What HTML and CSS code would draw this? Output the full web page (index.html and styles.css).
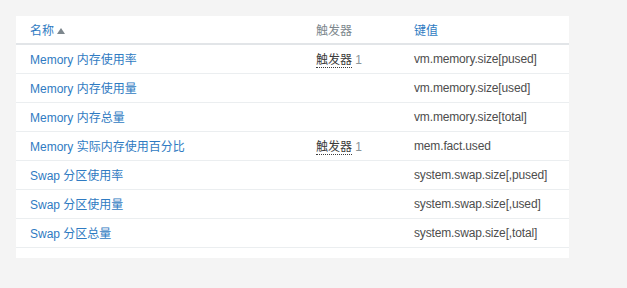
FILE: index.html
```html
<!DOCTYPE html>
<html lang="zh">
<head>
    <meta charset="UTF-8">
    <title>监控项</title>
    <link rel="stylesheet" href="styles.css">
</head>
<body>
    <div class="panel">
        <table class="list">
            <thead>
                <tr>
                    <th class="col-name"><a class="sort">名称</a><span class="arrow"></span></th>
                    <th class="col-trig">触发器</th>
                    <th class="col-key"><a class="sort">键值</a></th>
                </tr>
            </thead>
            <tbody>
                <tr>
                    <td><a>Memory 内存使用率</a></td>
                    <td><span class="trig">触发器</span> <sup class="count">1</sup></td>
                    <td class="key">vm.memory.size[pused]</td>
                </tr>
                <tr>
                    <td><a>Memory 内存使用量</a></td>
                    <td></td>
                    <td class="key">vm.memory.size[used]</td>
                </tr>
                <tr>
                    <td><a>Memory 内存总量</a></td>
                    <td></td>
                    <td class="key">vm.memory.size[total]</td>
                </tr>
                <tr>
                    <td><a>Memory 实际内存使用百分比</a></td>
                    <td><span class="trig">触发器</span> <sup class="count">1</sup></td>
                    <td class="key">mem.fact.used</td>
                </tr>
                <tr>
                    <td><a>Swap 分区使用率</a></td>
                    <td></td>
                    <td class="key">system.swap.size[,pused]</td>
                </tr>
                <tr>
                    <td><a>Swap 分区使用量</a></td>
                    <td></td>
                    <td class="key">system.swap.size[,used]</td>
                </tr>
                <tr>
                    <td><a>Swap 分区总量</a></td>
                    <td></td>
                    <td class="key">system.swap.size[,total]</td>
                </tr>
            </tbody>
        </table>
    </div>
</body>
</html>
```

FILE: styles.css
```css
* {
    box-sizing: border-box;
    margin: 0;
    padding: 0;
}

body {
    background: #f4f4f4;
    font-family: "Liberation Sans", Arial, "Noto Sans CJK SC", sans-serif;
    font-size: 12px;
    color: #4d4d4d;
    padding: 16px;
}

.panel {
    background: #fff;
    width: 553px;
    padding-bottom: 10px;
}

.list {
    width: 100%;
    border-collapse: collapse;
}

.list th {
    text-align: left;
    font-weight: normal;
    color: #7d878d;
    height: 28px;
    padding: 0 14px;
    border-bottom: 2px solid #e2e5e8;
}

.list td {
    height: 29px;
    padding: 0 14px;
    border-bottom: 1px solid #ebeef0;
    white-space: nowrap;
}

.col-name {
    width: 286px;
}

.col-trig {
    width: 98px;
}

.key {
    letter-spacing: -0.15px;
}

a {
    color: #2f7bc2;
    cursor: pointer;
}

.arrow {
    display: inline-block;
    margin-left: 3px;
    border-left: 4px solid transparent;
    border-right: 4px solid transparent;
    border-bottom: 6px solid #7d878d;
    vertical-align: 1px;
}

.trig {
    color: #3b3b3b;
    border-bottom: 1px dotted #3b3b3b;
}

.count {
    color: #8a9499;
    font-size: 12px;
    vertical-align: baseline;
}
```
